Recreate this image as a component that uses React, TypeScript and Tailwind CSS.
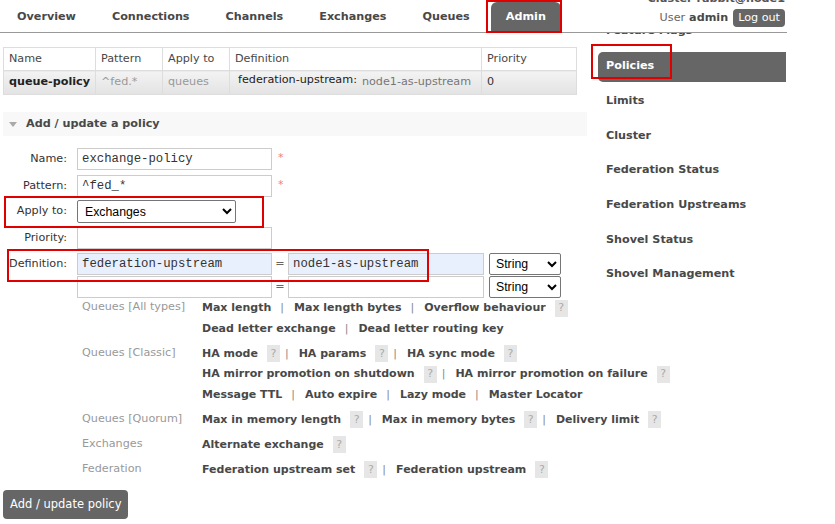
const tabs = ['Overview', 'Connections', 'Channels', 'Exchanges', 'Queues', 'Admin']

const sideItems = [
    'Feature Flags',
    'Policies',
    'Limits',
    'Cluster',
    'Federation Status',
    'Federation Upstreams',
    'Shovel Status',
    'Shovel Management',
]

type Item = { t: string; h?: boolean }

const groups: { label: string; lines: Item[][] }[] = [
    {
        label: 'Queues [All types]',
        lines: [
            [{ t: 'Max length' }, { t: 'Max length bytes' }, { t: 'Overflow behaviour', h: true }],
            [{ t: 'Dead letter exchange' }, { t: 'Dead letter routing key' }],
        ],
    },
    {
        label: 'Queues [Classic]',
        lines: [
            [{ t: 'HA mode', h: true }, { t: 'HA params', h: true }, { t: 'HA sync mode', h: true }],
            [
                { t: 'HA mirror promotion on shutdown', h: true },
                { t: 'HA mirror promotion on failure', h: true },
            ],
            [{ t: 'Message TTL' }, { t: 'Auto expire' }, { t: 'Lazy mode' }, { t: 'Master Locator' }],
        ],
    },
    {
        label: 'Queues [Quorum]',
        lines: [
            [
                { t: 'Max in memory length', h: true },
                { t: 'Max in memory bytes', h: true },
                { t: 'Delivery limit', h: true },
            ],
        ],
    },
    { label: 'Exchanges', lines: [[{ t: 'Alternate exchange', h: true }]] },
    {
        label: 'Federation',
        lines: [[{ t: 'Federation upstream set', h: true }, { t: 'Federation upstream', h: true }]],
    },
]

const Help = () => (
    <span className="ml-[9px] inline-flex h-[17px] w-[13px] items-center justify-center bg-[#e6e6e6] text-[11px] font-normal text-[#aaa]">
        ?
    </span>
)

const LinkLine = ({ items }: { items: Item[] }) => (
    <div className="flex h-[20.5px] items-center whitespace-nowrap">
        {items.map((it, i) => (
            <span key={it.t} className="flex items-center">
                {i > 0 && (
                    <span className={`${items[i - 1].h ? 'ml-[5px]' : 'ml-[9px]'} mr-[10px] font-normal text-[#888]`}>|</span>
                )}
                <span>{it.t}</span>
                {it.h && <Help />}
            </span>
        ))}
    </div>
)

const input = "h-[22px] w-[195px] border border-[#ccc] pl-[4px] font-['Liberation_Mono',monospace] text-[12.3px] text-[#333] outline-none"
const blue = ' bg-[#e8f0fe]'
const cell = 'border border-[#ddd] bg-linear-to-b from-[#f3f3f3] to-[#e3e3e3] px-[5px] whitespace-nowrap'

const TypeSelect = () => (
    <select className="ml-[5px] h-[22px] w-[72px] rounded-[2px] border border-[#767676] bg-white pl-[2px] font-['Liberation_Sans',Arial,sans-serif] text-[12.3px] text-black">
        <option>String</option>
    </select>
)

const Label = ({ children }: { children: string }) => (
    <div className="w-[64px] shrink-0 text-right text-[11.2px] text-[#333]">{children}</div>
)

export default function App() {
    return (
        <div className="relative h-[524px] w-[835px] overflow-hidden bg-white font-['DejaVu_Sans',Verdana,sans-serif] text-[#484848]">
            {/* top bar */}
            <div className="flex h-[33px] w-[787px] items-start justify-between border-b border-[#999]">
                <nav className="flex h-[32px] items-end gap-[6px] pl-[2px]">
                    {tabs.map((t) => (
                        <div
                            key={t}
                            className={
                                t === 'Admin'
                                    ? 'flex h-[30px] items-center rounded-t-[6px] bg-[#666] px-[15px] text-[11.2px] font-bold text-white'
                                    : 'flex h-[30px] items-center px-[15px] text-[11.2px] font-bold text-[#484848]'
                            }
                        >
                            {t}
                        </div>
                    ))}
                </nav>
                <div className="-mt-[8px] flex flex-col items-end pr-[2px]">
                    <div className="h-[14px] text-[11.2px] font-bold leading-[14px] text-[#555]">Cluster rabbit@node1</div>
                    <div className="mt-[3px] flex items-center text-[11.2px]">
                        <span className="text-[#666]">User</span>
                        <span className="ml-[4px] font-bold">admin</span>
                        <span className="ml-[5px] flex h-[18px] items-center rounded-[4px] bg-[#666] px-[5px] text-white">Log out</span>
                    </div>
                </div>
            </div>

            <div className="flex">
                <main className="w-[598px] shrink-0 pl-[3px]">
                    <table className="mt-[14px] w-[574px] table-fixed border-collapse text-[11.2px]">
                        <thead>
                            <tr className="h-[23px] text-left">
                                <th className="w-[92px] border border-[#ddd] px-[5px] font-normal">Name</th>
                                <th className="w-[67px] border border-[#ddd] px-[5px] font-normal">Pattern</th>
                                <th className="w-[67px] border border-[#ddd] px-[5px] font-normal">Apply to</th>
                                <th className="w-[252px] border border-[#ddd] px-[5px] font-normal">Definition</th>
                                <th className="border border-[#ddd] px-[5px] font-normal">Priority</th>
                            </tr>
                        </thead>
                        <tbody>
                            <tr className="h-[24px]">
                                <td className={`${cell} font-bold text-[#222]`}>queue-policy</td>
                                <td className={`${cell} text-[#999]`}>^fed.*</td>
                                <td className={`${cell} text-[#999]`}>queues</td>
                                <td className={`${cell} pl-[8px]`}>
                                    <span className="relative -top-[2px] text-[#222]">federation-upstream:</span>
                                    <span className="ml-[5px] text-[#777]">node1-as-upstream</span>
                                </td>
                                <td className={`${cell} text-[#333]`}>0</td>
                            </tr>
                        </tbody>
                    </table>

                    <div className="mt-[17px] flex h-[24px] w-[584px] items-center bg-[#f8f8f8]">
                        <span className="ml-[6px] h-0 w-0 border-x-[4px] border-t-[5px] border-x-transparent border-t-[#aaa]" />
                        <span className="ml-[9px] text-[11.2px] font-bold">Add / update a policy</span>
                    </div>

                    {/* form */}
                    <div className="mt-[12px] flex items-center">
                        <Label>Name:</Label>
                        <input className={`ml-[10px] ${input}`} defaultValue="exchange-policy" />
                        <span className="ml-[6px] self-start pt-[2px] text-[11px] text-[#f08080]">*</span>
                    </div>
                    <div className="mt-[5px] flex items-center">
                        <Label>Pattern:</Label>
                        <input className={`ml-[10px] ${input}`} defaultValue="^fed_*" />
                        <span className="ml-[6px] self-start pt-[2px] text-[11px] text-[#f08080]">*</span>
                    </div>
                    <div className="mt-[3px] flex items-center">
                        <Label>Apply to:</Label>
                        <select className="ml-[10px] h-[23px] w-[159px] rounded-[2px] border border-[#767676] bg-white pl-[3px] font-['Liberation_Sans',Arial,sans-serif] text-[12.3px] text-black">
                            <option>Exchanges</option>
                        </select>
                    </div>
                    <div className="mt-[4px] flex items-center">
                        <Label>Priority:</Label>
                        <input className={`ml-[10px] ${input}`} />
                    </div>
                    <div className="mt-[4px] flex items-center">
                        <Label>Definition:</Label>
                        <input className={`ml-[10px] ${input}${blue}`} defaultValue="federation-upstream" />
                        <span className="w-[16px] text-center text-[11.2px] text-[#666]">=</span>
                        <input className={`${input}${blue} w-[196px]`} defaultValue="node1-as-upstream" />
                        <TypeSelect />
                    </div>
                    <div className="mt-[1px] flex items-center">
                        <div className="w-[64px] shrink-0" />
                        <input className={`ml-[10px] ${input}`} />
                        <span className="w-[16px] text-center text-[11.2px] text-[#666]">=</span>
                        <input className={`${input} w-[196px]`} />
                        <TypeSelect />
                    </div>

                    {/* help keys */}
                    <div className="ml-[79px] flex flex-col gap-y-[4.5px]">
                        {groups.map((g) => (
                            <div key={g.label} className="flex">
                                <div className="h-[20.5px] w-[120px] shrink-0 text-[11.2px] leading-[17px] text-[#999]">{g.label}</div>
                                <div className="text-[11px] font-bold text-[#484848]">
                                    {g.lines.map((l, i) => (
                                        <LinkLine key={i} items={l} />
                                    ))}
                                </div>
                            </div>
                        ))}
                    </div>

                    <button className="mt-[10px] h-[29px] rounded-[4px] bg-[#666] px-[7px] text-[11.5px] text-white">
                        Add / update policy
                    </button>
                </main>

                <aside className="h-[260px] w-[188px] shrink-0 overflow-hidden">
                    <div className="-mt-[18.5px]">
                        {sideItems.map((s) =>
                            s === 'Policies' ? (
                                <div key={s} className="flex h-[34.7px] items-center">
                                    <div className="flex h-[30px] w-full items-center rounded-l-[5px] bg-[#666] pl-[8px] text-[11.2px] font-bold text-white">
                                        {s}
                                    </div>
                                </div>
                            ) : (
                                <div key={s} className="flex h-[34.7px] items-center pl-[8px] text-[11.2px] font-bold text-[#484848]">
                                    {s}
                                </div>
                            )
                        )}
                    </div>
                </aside>
            </div>

            {/* red annotation boxes */}
            <div className="absolute left-[486px] top-0 h-[33px] w-[76px] border-2 border-[#e00000]" />
            <div className="absolute left-[591px] top-[44px] h-[35px] w-[81px] border-2 border-[#e00000]" />
            <div className="absolute left-[4px] top-[196px] h-[32px] w-[260px] border-2 border-[#e00000]" />
            <div className="absolute left-[7px] top-[249px] h-[33px] w-[422px] border-2 border-[#e00000]" />
        </div>
    )
}
